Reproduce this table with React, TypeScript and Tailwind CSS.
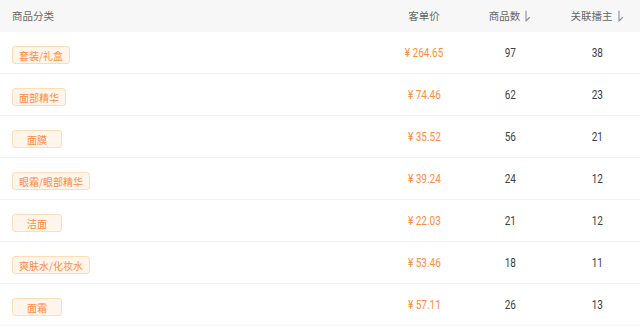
import React from 'react'

const rows = [
  { cat: '套装/礼盒', price: '264.65', goods: 97, hosts: 38 },
  { cat: '面部精华', price: '74.46', goods: 62, hosts: 23 },
  { cat: '面膜', price: '35.52', goods: 56, hosts: 21 },
  { cat: '眼霜/眼部精华', price: '39.24', goods: 24, hosts: 12 },
  { cat: '洁面', price: '22.03', goods: 21, hosts: 12 },
  { cat: '爽肤水/化妆水', price: '53.46', goods: 18, hosts: 11 },
  { cat: '面霜', price: '57.11', goods: 26, hosts: 13 },
]

const cjk = { fontFamily: '"Noto Sans CJK SC", "Noto Sans", sans-serif' }
const num = { fontFamily: 'Roboto, "Noto Sans CJK SC", sans-serif' }

function SortArrow() {
  return (
    <svg width="7" height="12" viewBox="0 0 7 12" className="ml-1" fill="none">
      <path d="M2 1v10l3.5-3.5" stroke="#8a8f99" strokeWidth="1.1" strokeLinecap="round" strokeLinejoin="round" />
    </svg>
  )
}

// condensed digits, the reference uses a narrow DIN-like face
function Num({ children, className }: { children: React.ReactNode; className: string }) {
  return (
    <div className={'flex justify-center ' + className}>
      <span className="inline-block text-[13px] scale-x-[0.77] whitespace-nowrap" style={num}>
        {children}
      </span>
    </div>
  )
}

export default function App() {
  return (
    <div className="w-[640px] h-[326px] bg-white overflow-hidden" style={cjk}>
      {/* header */}
      <div className="grid grid-cols-[1fr_84px_88px_86px] h-8 items-center bg-[#f7f7f7] text-[10.5px] text-[#666]">
        <div className="pl-3">商品分类</div>
        <div className="text-center">客单价</div>
        <div className="flex items-center justify-center">商品数<SortArrow /></div>
        <div className="flex items-center justify-center">关联播主<SortArrow /></div>
      </div>

      {rows.map((r) => (
        <div
          key={r.cat}
          className="grid grid-cols-[1fr_84px_88px_86px] h-[42px] items-center border-b border-[#f2f2f2]"
        >
          <div className="pl-3">
            <span className="inline-flex items-center justify-center min-w-[50px] h-[18px] px-[6px] rounded-[3px] border border-[#fddcb8] bg-[#fff5ea] text-[10px] text-[#ff8c3c]">
              {r.cat}
            </span>
          </div>
          <Num className="text-[#ff8c3c]">¥ {r.price}</Num>
          <Num className="text-[#3b3f48]">{r.goods}</Num>
          <Num className="text-[#3b3f48]">{r.hosts}</Num>
        </div>
      ))}
    </div>
  )
}
